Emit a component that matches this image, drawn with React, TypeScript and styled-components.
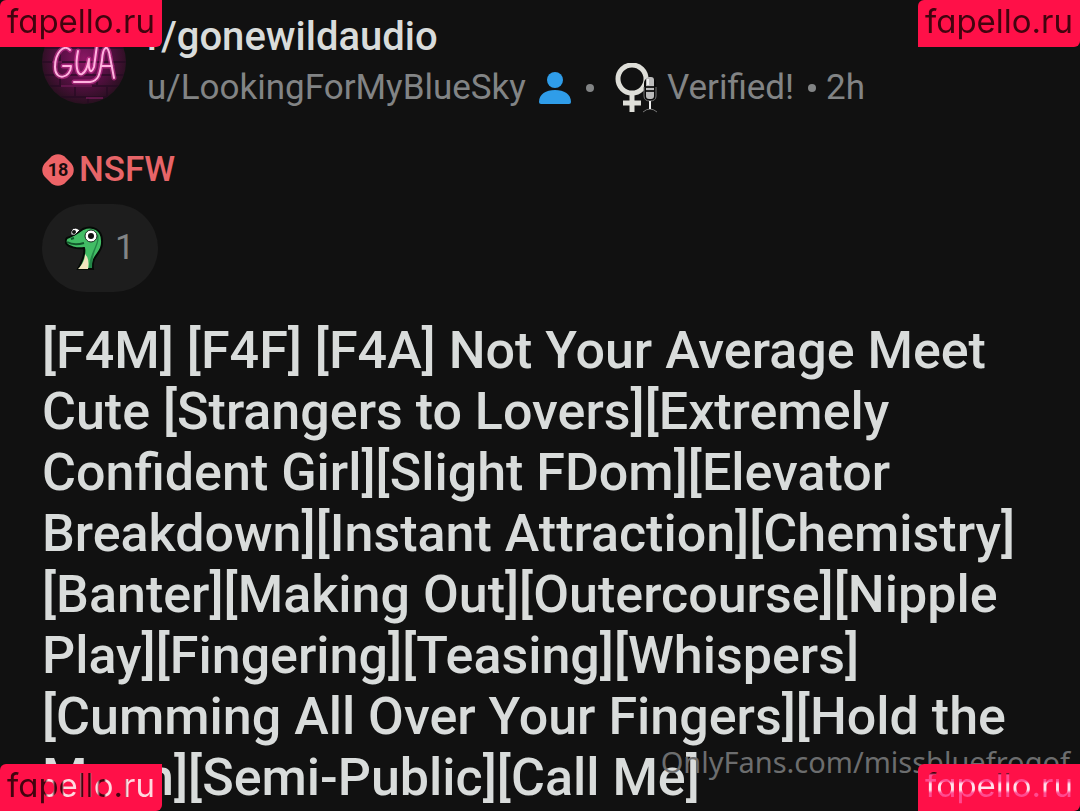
import React from "react";
import styled, { createGlobalStyle } from "styled-components";

const GlobalStyle = createGlobalStyle`
  *, *::before, *::after { box-sizing: border-box; }
  html, body { margin: 0; background: #111111; }
  body { font-family: Roboto, "Liberation Sans", sans-serif; overflow: hidden; }
  a { color: inherit; text-decoration: none; }
`;

const Page = styled.main`
  position: relative;
  height: 100vh;
  overflow: hidden;
  padding: 16px 42px 0;
  color: #d9dcdb;
`;

const Header = styled.header`
  display: flex;
  align-items: flex-start;
  gap: 21px;
`;

const Avatar = styled.svg`
  flex: none;
  width: 84px;
  height: 84px;
  margin-top: 4px;
`;

const Names = styled.div`
  display: flex;
  flex-direction: column;
  gap: 6px;
`;

const Community = styled.a`
  font-size: 40px;
  line-height: 42px;
  font-weight: 500;
`;

const Meta = styled.div`
  display: flex;
  align-items: center;
  font-size: 35px;
  line-height: 44px;
  height: 48px;
  color: #828485;
  white-space: nowrap;
`;

const PersonIcon = styled.svg`
  width: 34px;
  height: 34px;
  margin-left: 12px;
`;

const FlairIcon = styled.svg`
  width: 44px;
  height: 50px;
  margin: 0 8px 0 21px;
`;

const Dot = styled.span`
  width: 8px;
  height: 8px;
  border-radius: 50%;
  background: currentColor;
  margin: 0 0 0 14px;
`;

const Age = styled.time`
  margin-left: 10px;
`;

const Nsfw = styled.div`
  display: flex;
  align-items: center;
  gap: 5px;
  margin-top: 36px;
  color: #e76568;
  font-size: 35px;
  line-height: 44px;
  font-weight: 500;
`;

const AgeIcon = styled.svg`
  width: 32px;
  height: 32px;
`;

const Award = styled.button`
  display: flex;
  align-items: center;
  gap: 12px;
  height: 88px;
  margin-top: 12px;
  padding: 0 23px;
  border: 0;
  border-radius: 44px;
  background: #1d1d1d;
  color: #828485;
  font: 400 35px/44px Roboto, sans-serif;
`;

const AwardIcon = styled.svg`
  width: 38px;
  height: 44px;
`;

const Title = styled.h1`
  margin: 28px 0 0;
  font-size: 52px;
  line-height: 61px;
  font-weight: 500;
`;

const Credit = styled.a`
  position: absolute;
  right: 10px;
  bottom: 29px;
  font: 400 29px/40px "Noto Sans", "Open Sans", sans-serif;
  color: #6c6d6e;
`;

const Stamp = styled.a<{ $side: "left" | "right"; $edge: "top" | "bottom" }>`
  position: absolute;
  ${(p) => p.$side}: 0;
  ${(p) => p.$edge}: 0;
  width: 162px;
  height: 47px;
  text-align: center;
  background: #ff1048;
  border-radius: 6px 0;
  font: 400 33px/42px Inter, "Liberation Sans", sans-serif;
  font-feature-settings: "cv11";
`;

const StampText = styled.span<{ $fill: string }>`
  display: block;
  background: ${(p) => p.$fill};
  background-clip: text;
  -webkit-background-clip: text;
  color: transparent;
`;

const DARK = "linear-gradient(#42040f, #42040f)";
const MIXED =
  "linear-gradient(90deg, #42040f 0 45px, #ffd9df 48px 52px, #42040f 55px 62px, #ffd9df 64px 79px, #42040f 82px 90px, #ffd9df 92px 97px, #42040f 100px 104px, #ffd9df 106px 113px, #42040f 116px 124px, #ffd9df 127px 100%)";
const PINK =
  "linear-gradient(180deg, #42040f 0 9px, #ff4b90 11px 17px, #ffe3ec 20px 26px, #ff4b90 29px 100%)";

const stamps = [
  { side: "left", edge: "top", fill: DARK },
  { side: "right", edge: "top", fill: DARK },
  { side: "left", edge: "bottom", fill: MIXED },
  { side: "right", edge: "bottom", fill: PINK },
] as const;

export default function App() {
  return (
    <>
      <GlobalStyle />
      <Page>
        <Header>
          <Avatar viewBox="0 0 84 84" role="img" aria-label="Community avatar">
            <defs>
              <radialGradient id="glow" cx="50%" cy="46%" r="54%">
                <stop offset="0" stopColor="#8a1763" />
                <stop offset=".5" stopColor="#5c0f47" />
                <stop offset="1" stopColor="#28101f" />
              </radialGradient>
              <clipPath id="round"><circle cx="42" cy="42" r="42" /></clipPath>
            </defs>
            <g clipPath="url(#round)">
              <rect width="84" height="84" fill="url(#glow)" />
              <path d="M0 28H84M0 42H84M0 55H84M0 66H84M0 77H84M18 28v14M70 42v13M18 55v11M55 55v11M33 66v11M65 66v11M46 77v7" stroke="#260b23" strokeWidth="2" opacity=".65" />
              <path d="M19 66H50M10 42H20M44 78H61" stroke="#bd2b8b" strokeWidth="1" opacity=".7" />
              <g fill="none" strokeLinecap="round" strokeLinejoin="round">
                <path d="M28 30C22 23 13 33 13 47C13 62 29 58 29 46H21M36 31C33 45 35 56 40 54C44 52 46 45 47 39C46 51 49 55 52 47L55 25M32 62H48C58 61 58 51 60 40C61 26 66 23 68 37L72 58M59 46H70" stroke="#e83aa5" strokeWidth="5" opacity=".5" />
                <path d="M28 30C22 23 13 33 13 47C13 62 29 58 29 46H21M36 31C33 45 35 56 40 54C44 52 46 45 47 39C46 51 49 55 52 47L55 25M32 62H48C58 61 58 51 60 40C61 26 66 23 68 37L72 58M59 46H70" stroke="#ffb3df" strokeWidth="2" />
              </g>
            </g>
          </Avatar>
          <Names>
            <Community href="#community">r/gonewildaudio</Community>
            <Meta>
              <a href="#author">u/LookingForMyBlueSky</a>
              <PersonIcon viewBox="0 0 34 34" fill="#2f9de9" aria-hidden="true">
                <circle cx="17" cy="9" r="8" />
                <path d="M1 31C1 23 8 19 17 19S33 23 33 31Q33 33 31 33H3Q1 33 1 31Z" />
              </PersonIcon>
              <Dot />
              <FlairIcon viewBox="0 0 44 50" aria-hidden="true">
                <g fill="none" stroke="#deded8" strokeWidth="5">
                  <circle cx="17" cy="16" r="14" />
                  <path d="M17 30V49M8 40H26" />
                </g>
                <rect x="29" y="15" width="12" height="24" rx="5" fill="#090909" />
                <rect x="31" y="14" width="8" height="22" rx="3" fill="#bbb" />
                <path d="M31 24H39M31 28H39" stroke="#222" strokeWidth="2" />
                <path d="M29 24V33Q29 38 35 38T41 33V24M28 49Q35 43 42 49" fill="none" stroke="#777" strokeWidth="1" />
                <path d="M33 16V22M35 38V46" stroke="#eee" strokeWidth="2" />
              </FlairIcon>
              <span>Verified!</span>
              <Dot />
              <Age>2h</Age>
            </Meta>
          </Names>
        </Header>

        <Nsfw>
          <AgeIcon viewBox="0 0 32 32" aria-hidden="true">
            <path d="M8 4C12-1 20-1 24 4L28 8C33 12 33 20 28 24L24 28C20 33 12 33 8 28L4 24C-1 20-1 12 4 8Z" fill="#ed6467" />
            <text x="16" y="22" textAnchor="middle" fontFamily="Roboto, sans-serif" fontSize="18" fontWeight="700" fill="#1b0c0d">18</text>
          </AgeIcon>
          NSFW
        </Nsfw>

        <Award type="button" aria-label="1 award">
          <AwardIcon viewBox="0 0 38 44" aria-hidden="true">
            <path d="M2 12C8 10 14 6 18 3C27-1 38 3 37 17C37 28 26 29 28 43H13C16 37 21 29 19 22C12 23 3 21 1 17Q0 14 2 12Z" fill="#42bd65" stroke="#050b07" strokeWidth="2" />
            <path d="M33 8C36 18 27 23 27 42H24C24 28 34 18 32 10Z" fill="#238547" />
            <path d="M13 43C18 38 20 33 20 28Q25 33 23 43Z" fill="#f1e5be" />
            <path d="M2 16Q9 20 19 17M6 13L9 12" fill="none" stroke="#12572b" strokeWidth="2" />
            <path d="M6 9Q5 2 11 2L15 4L10 9Z" fill="#fff" stroke="#111" strokeWidth="1" />
            <circle cx="9" cy="6" r="2" fill="#111" />
            <circle cx="26" cy="10" r="6" fill="#fff" stroke="#13271a" />
            <circle cx="26" cy="10" r="3" fill="#111" />
          </AwardIcon>
          1
        </Award>

        <Title>
          [F4M] [F4F] [F4A] Not Your Average Meet Cute [Strangers to Lovers][Extremely
          Confident Girl][Slight FDom][Elevator Breakdown][Instant
          Attraction][Chemistry][Banter][Making Out][Outercourse][Nipple
          Play][Fingering][Teasing][Whispers][Cumming All Over Your Fingers][Hold the
          Moan][Semi-Public][Call Me]
        </Title>

        <Credit href="#creator">OnlyFans.com/missbluefrogof</Credit>
        {stamps.map((s) => (
          <Stamp key={s.side + s.edge} href="#source" $side={s.side} $edge={s.edge}>
            <StampText $fill={s.fill}>fapello.ru</StampText>
          </Stamp>
        ))}
      </Page>
    </>
  );
}
